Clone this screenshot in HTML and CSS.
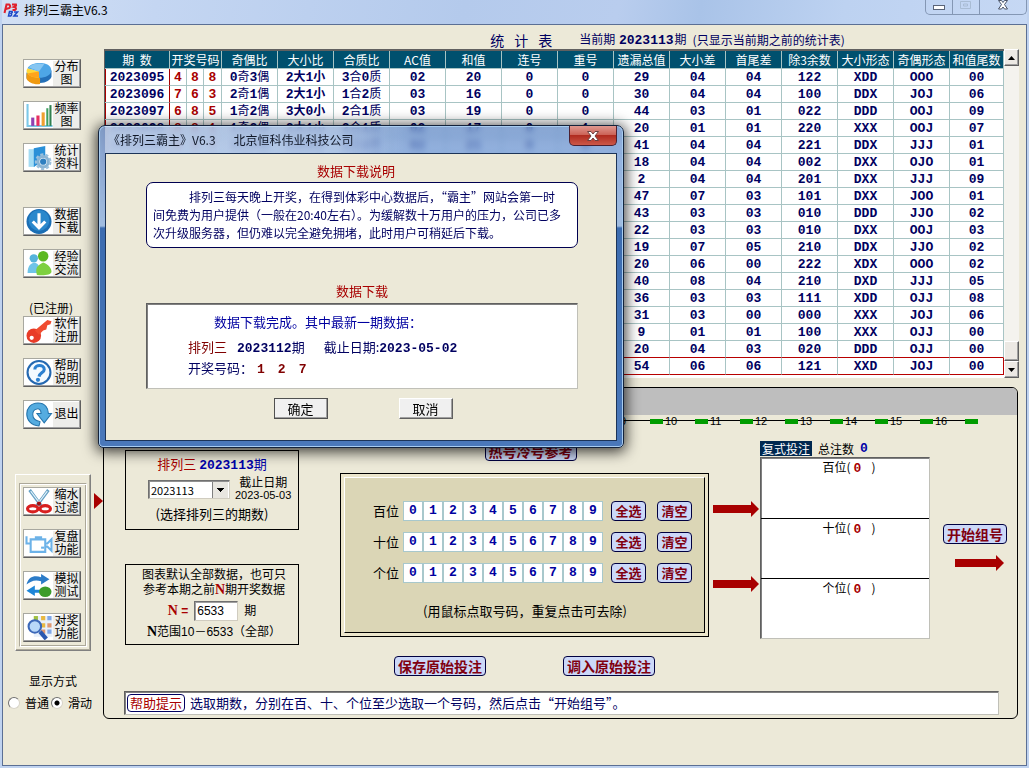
FILE: index.html
```html
<!DOCTYPE html>
<html lang="zh-CN">
<head>
  <meta charset="UTF-8">
  <meta name="viewport" content="width=device-width, initial-scale=1.0">
  <title>排列三霸主V6.3</title>
  <link rel="stylesheet" href="styles.css">
</head>
<body>
  <div class="window">
    <header class="titlebar">
      <svg class="app-logo" viewBox="0 0 16 16" width="16" height="16">
        <path d="M1.500 12 L3.500 3.500 H6 Q8 4.500 6.500 7 L3 8" fill="none" stroke="#e0202c" stroke-width="2"/>
        <path d="M9 3.500 H13 Q13.500 5 11 6 Q14.500 7 12 9 H9.500" fill="none" stroke="#e0202c" stroke-width="2"/>
        <path d="M6.500 10.500 H9 Q10 11.500 8 12.500 Q9.500 14 7.500 15 H5.500z M11 11 H14.500 L11 15 H15" fill="none" stroke="#1c48c8" stroke-width="1.500"/>
      </svg>
      <h1>排列三霸主V6.3</h1>
      <div class="win-buttons">
        <button aria-label="最小化"><svg width="14" height="14"><rect x="1.500" y="5.500" width="11" height="4" fill="#fff" stroke="#5a6478"/></svg></button>
        <button aria-label="最大化"><svg width="14" height="14"><path d="M1.500 1.500h10v7h-10z M4.500 4h4v2h-4z" fill="none" stroke="#a9bcd4"/></svg></button>
        <button class="win-close" aria-label="关闭"><svg width="14" height="14"><path d="M2.500 .5h3l1.500 2 1.500-2h3l-3 4 3 4.500h-3l-1.500-2-1.500 2h-3l3-4.500z" fill="#fff" stroke="#4a5468"/></svg></button>
      </div>
    </header>

    <div class="client">
      <nav class="sidebar">
        <div class="tool-group">
          <button class="tool">
            <svg viewBox="0 0 26 24"><path d="M1 11v5c1 4 7 6 13 5 6 0 10-3 11-6V9z" fill="#2470b8"/><path d="M1 12v5c2 4 8 6 13 5v-6z" fill="#f09a10"/><path d="M13 10L2 7c-3 4 1 9 11 9z" fill="#ffd83a"/><path d="M13 10v6c-5 0-9-1-11-4z" fill="#ffa41c"/><path d="M13 10L2 7C5 1 20 0 24 6c3 6-3 10-11 10z" fill="#4ea6e6"/><path d="M13 10L3 6C7 2 14 2 18 3z" fill="#86c6f2"/></svg>
            <span>分布<br>图</span>
          </button>
          <button class="tool">
            <svg viewBox="0 0 26 24"><path d="M2 1v21h24" fill="none" stroke="#7cc8e8" stroke-width="2"/><path d="M7 22v-8" stroke="#9040b0" stroke-width="3"/><path d="M12 22V12" stroke="#e83060" stroke-width="3"/><path d="M17 22V9" stroke="#f0a030" stroke-width="3"/><path d="M21 22V5" stroke="#40a060" stroke-width="2"/><path d="M24 22V2" stroke="#308050" stroke-width="2"/></svg>
            <span>频率<br>图</span>
          </button>
          <button class="tool">
            <svg viewBox="0 0 26 24"><path d="M3 4h6v17H3z" fill="#a4dcf4"/><path d="M8 3l11-2v13L8 21z" fill="#2a90d8"/><circle cx="17" cy="16" r="5" fill="#fff" stroke="#8ab4d4" stroke-width="3"/><circle cx="17" cy="16" r="7" fill="none" stroke="#9cc0dc" stroke-width="2" stroke-dasharray="3 2"/><circle cx="17" cy="16" r="3" fill="#2f7fc0"/></svg>
            <span>统计<br>资料</span>
          </button>
        </div>

        <div class="tool-group">
          <button class="tool">
            <svg viewBox="0 0 26 24"><circle cx="13" cy="12" r="12" fill="#1b6eb4"/><circle cx="13" cy="11" r="10" fill="#2a88cc"/><path d="M13 4v13M7 12l6 6 6-6" fill="none" stroke="#fff" stroke-width="3"/></svg>
            <span>数据<br>下载</span>
          </button>
          <button class="tool">
            <svg viewBox="0 0 26 24"><circle cx="8" cy="7" r="4" fill="#55b4dc"/><path d="M2 21c0-12 11-13 12-3v3z" fill="#6fc4e8"/><circle cx="17" cy="5" r="5" fill="#5cb820"/><path d="M11 23c-2-8 1-9 6-12 5 2 8 5 8 9 0 3-8 4-14 3z" fill="#7ed040"/></svg>
            <span>经验<br>交流</span>
          </button>
        </div>

        <p class="registered">(已注册)</p>
        <div class="tool-group">
          <button class="tool">
            <svg viewBox="0 0 26 24"><circle cx="8" cy="17" r="7" fill="#e83c28"/><path d="M9 12L21 2l4 1-1 3-3 1-1 4-3 1-4 4z" fill="#f04c30"/><circle cx="6" cy="19" r="2" fill="#fff"/></svg>
            <span>软件<br>注册</span>
          </button>
          <button class="tool">
            <svg viewBox="0 0 26 24"><circle cx="13" cy="12" r="11" fill="#f4faff" stroke="#2468b0" stroke-width="2"/><path d="M9 9c0-5 9-5 9 0 0 3-4 3-5 7" fill="none" stroke="#2c80d0" stroke-width="3"/><circle cx="12" cy="19" r="2" fill="#2c80d0"/></svg>
            <span>帮助<br>说明</span>
          </button>
          <button class="tool">
            <svg viewBox="0 0 26 24"><path d="M13 23C-3 22-2 1 12 1c7 0 10 5 10 10h3l-7 9-7-9h4c0-7-8-5-8 1 0 5 4 6 7 7z" fill="#55ace0" stroke="#2474ac"/></svg>
            <span>退出</span>
          </button>
        </div>

        <div class="tool-panel">
          <div class="tool-panel-inner">
            <button class="tool">
              <svg viewBox="0 0 26 24"><path d="M4 1l11 15M22 1L11 16" stroke="#64a0c4" stroke-width="3"/><path d="M5 2l9 12M21 2l-9 12" stroke="#e4f4fc"/><ellipse cx="7" cy="19" rx="5" ry="3" fill="none" stroke="#d82020" stroke-width="3"/><ellipse cx="19" cy="19" rx="5" ry="3" fill="none" stroke="#d82020" stroke-width="3"/><circle cx="13" cy="14" r="2" fill="#a01010"/></svg>
              <span>缩水<br>过滤</span>
            </button>
            <button class="tool">
              <svg viewBox="0 0 26 24"><path d="M5 8h14v12H5zM10 8V6h6M1 5v7h4M19 12h2l4-4v11l-4-4h-2" fill="none" stroke="#6cb2e8" stroke-width="2"/><path d="M15 16h3" stroke="#6cb2e8" stroke-width="2"/></svg>
              <span>复盘<br>功能</span>
            </button>
            <button class="tool">
              <svg viewBox="0 0 26 24"><path d="M1 11C3 3 9 2 15 4V1l8 5-8 5V8C9 6 5 8 1 11z" fill="#2c7cc8"/><path d="M14 16H9v-4L1 17l8 5v-3h5z" fill="#1e86d8"/><ellipse cx="19" cy="18" rx="6" ry="5" fill="#3c9c2c"/></svg>
              <span>模拟<br>测试</span>
            </button>
            <button class="tool">
              <svg viewBox="0 0 26 24"><path d="M8 1h18v20H8z" fill="#e8f0fa"/><path d="M8 3h4" stroke="#a0c040" stroke-width="4"/><path d="M15 3h4M15 10h4" stroke="#e8b840" stroke-width="4"/><path d="M21 3h4M21 16h4" stroke="#80a8e8" stroke-width="4"/><path d="M21 10h4M15 16h4" stroke="#e09870" stroke-width="4"/><circle cx="9" cy="11" r="6" fill="#b8d8f8" stroke="#3c68b8" stroke-width="2"/><path d="M14 16l6 7" stroke="#2a58b0" stroke-width="4"/></svg>
              <span>对奖<br>功能</span>
            </button>
          </div>
          <i class="pointer"></i>
        </div>

        <fieldset class="display-mode">
          <legend>显示方式</legend>
          <label><input type="radio" name="mode">普通</label>
          <label><input type="radio" name="mode" checked>滑动</label>
        </fieldset>
      </nav>

      <main class="main">
        <div class="stats-title">
          <h2><span>统</span><span>计</span><span>表</span></h2>
          <p>当前期 <b>2023113</b>期</p>
          <small>(只显示当前期之前的统计表)</small>
        </div>

        <div class="stats">
          <table>
            <colgroup>
              <col class="c-issue"><col class="c-num"><col class="c-num"><col class="c-num-last">
              <col><col><col><col><col><col><col><col><col><col><col><col><col><col class="c-tail">
            </colgroup>
            <thead>
              <tr>
                <th>期&nbsp; 数</th><th colspan="3">开奖号码</th><th>奇偶比</th><th>大小比</th><th>合质比</th>
                <th>AC值</th><th>和值</th><th>连号</th><th>重号</th><th>遗漏总值</th><th>大小差</th>
                <th>首尾差</th><th>除3余数</th><th>大小形态</th><th>奇偶形态</th><th>和值尾数</th>
              </tr>
            </thead>
            <tbody id="statsBody"></tbody>
          </table>
          <div class="scrollbar">
            <button aria-label="向上"><svg width="7" height="4"><path d="M0 4h7L3.500 0z"/></svg></button>
            <div class="thumb"></div>
            <button aria-label="向下"><svg width="7" height="4"><path d="M0 0h7L3.500 4z"/></svg></button>
          </div>
        </div>

        <section class="panel">
          <div class="panel-strip"></div>
          <ol class="ruler" id="ruler"></ol>

          <div class="work">
            <div class="side-boxes">
              <div class="box">
                <p class="box-title"><span class="red">排列三</span> <b class="blue">2023113</b><span class="blue">期</span></p>
                <div class="issue-row">
                  <select aria-label="期数"><option>2023113</option></select>
                  <div class="deadline">截止日期<span>2023-05-03</span></div>
                </div>
                <p class="hint">(选择排列三的期数)</p>
              </div>
              <div class="box box-range">
                <p>图表默认全部数据，也可只<br>参考本期之前<b class="n red">N</b>期开奖数据</p>
                <div class="n-row"><label for="nInput"><b class="n">N</b> =</label><input type="text" id="nInput" value="6533">期</div>
                <p><b class="n">N</b>范围10－6533（全部）</p>
              </div>
            </div>

            <div class="center">
              <button class="pill pill-wide hot">热号冷号参考</button>
              <div class="picker">
                <div class="picker-inner" id="picker">
                  <p class="hint">(用鼠标点取号码，重复点击可去除)</p>
                </div>
              </div>
              <div class="save-row">
                <button class="pill pill-wide">保存原始投注</button>
                <button class="pill pill-wide">调入原始投注</button>
              </div>
            </div>

            <div class="arrows">
              <svg viewBox="0 0 46 16"><path d="M0 4h38V0l8 8-8 8v-4H0z" fill="#a80000"/></svg>
              <svg viewBox="0 0 46 16"><path d="M0 4h38V0l8 8-8 8v-4H0z" fill="#a80000"/></svg>
            </div>

            <div class="result">
              <div class="result-head"><span class="tag">复式投注</span>总注数 <b class="blue">0</b></div>
              <div class="result-box">
                <div>百位(<b class="red">0</b>)</div>
                <div>十位(<b class="red">0</b>)</div>
                <div>个位(<b class="red">0</b>)</div>
              </div>
            </div>

            <div class="start">
              <button class="pill pill-wide">开始组号</button>
              <svg viewBox="0 0 49 16"><path d="M0 4h41V0l8 8-8 8v-4H0z" fill="#a80000"/></svg>
            </div>
          </div>

          <div class="help"><strong>帮助提示</strong><span>选取期数，分别在百、十、个位至少选取一个号码，然后点击“开始组号”。</span></div>
        </section>
      </main>
    </div>

    <div class="dialog" role="dialog" aria-label="数据下载">
      <div class="dialog-title">
        <span>《排列三霸主》V6.3</span><span>北京恒科伟业科技公司</span>
        <button class="dialog-close" aria-label="关闭"><svg width="14" height="12"><path d="M1.500 1.500h3.500l2 2.500 2-2.500h3.500l-3.500 4.500 3.500 4.500h-3.500l-2-2.500-2 2.500h-3.500l3.500-4.500z" fill="#fff" stroke="#6c4040"/></svg></button>
      </div>
      <div class="dialog-body">
        <h3>数据下载说明</h3>
        <p class="notice">排列三每天晚上开奖，在得到体彩中心数据后，“霸主”网站会第一时<br>间免费为用户提供（一般在20:40左右）。为缓解数十万用户的压力，公司已多<br>次升级服务器，但仍难以完全避免拥堵，此时用户可稍延后下载。</p>
        <h3>数据下载</h3>
        <div class="download">
          <p class="done">数据下载完成。其中最新一期数据：</p>
          <p class="latest"><span class="maroon">排列三</span><span><b>2023112</b>期</span><span class="until">截止日期:<b>2023-05-02</b></span></p>
          <p class="drawn">开奖号码：<b>1</b><b>2</b><b>7</b></p>
        </div>
        <div class="dialog-actions">
          <button class="default">确定</button>
          <button>取消</button>
        </div>
      </div>
    </div>
  </div>
  <script src="script.js"></script>
</body>
</html>
```

FILE: styles.css
```css
* {
  box-sizing: border-box;
}
body {
  margin: 0;
  font-family: "Noto Sans CJK SC", sans-serif;
  font-size: 12px;
  line-height: 16px;
  color: #000;
}
h1, h2, h3, p, ol {
  margin: 0;
  padding: 0;
  font-size: 12px;
  font-weight: normal;
}
button, select, input {
  font-family: inherit;
  font-size: 12px;
  margin: 0;
  padding: 0;
}
b {
  font-family: "Liberation Mono", "Noto Sans CJK SC", monospace;
  font-size: 13px;
}
.red {
  color: #a80000;
}
.blue {
  color: #0000a8;
}
.maroon {
  color: #800000;
}

/* window */
.window {
  position: relative;
  display: flex;
  flex-direction: column;
  min-height: 100vh;
  padding: 0 2px 2px;
  background: #c0d3f0;
}
.titlebar {
  display: flex;
  height: 24px;
  background: linear-gradient(100deg, #d2e0f4 0%, #c4d6f2 15%, #b4caec 45%, #b9cdee 60%, #a9c3e8 68%, #bdd2f1 82%, #c6d8f4 100%);
}
.app-logo {
  margin: 1px 5px 0 1px;
}
.titlebar h1 {
  flex: 1;
  line-height: 19px;
}
.win-buttons {
  display: flex;
  width: 102px;
  height: 15px;
  border: 1px solid #8497b4;
  border-top: 0;
  border-radius: 0 0 5px 5px;
}
.win-buttons button {
  display: flex;
  flex: 1;
  justify-content: center;
  border: 0;
  border-right: 1px solid #8497b4;
  background: none;
}
.win-buttons .win-close {
  flex: 0 0 46px;
  border-right: 0;
}
.client {
  flex: 1;
  display: flex;
  border: 1px solid #5b6f94;
  background: #ece9d8;
}

/* left tool bar */
.sidebar {
  flex: 0 0 100px;
  padding-top: 34px;
}
.tool-group {
  display: flex;
  flex-direction: column;
  gap: 13px;
  padding-left: 20px;
  margin-bottom: 35px;
}
.tool {
  display: flex;
  align-items: center;
  width: 58px;
  height: 29px;
  border: 1px solid;
  border-color: #a8a8a0 #606060 #606060 #a8a8a0;
  box-shadow: inset -1px -1px #a0a0a0, inset 1px 1px #fff;
  background: #ededea;
}
.tool svg {
  flex: 0 0 28px;
  height: 25px;
  margin-left: 1px;
  background: #fff;
}
.tool span {
  flex: 1;
  font-family: "Liberation Sans", "Noto Sans CJK SC", sans-serif;
  font-size: 12px;
  line-height: 13px;
  white-space: nowrap;
}
.registered {
  margin-top: -13px;
  padding-left: 26px;
}
.registered + .tool-group {
  margin-bottom: 45px;
}
.tool-panel {
  position: relative;
  width: 76px;
  margin-left: 12px;
  padding: 8px 3px 3px;
  border: 1px solid;
  border-color: #fff #808080 #808080 #fff;
  box-shadow: inset -1px -1px #aca899;
}
.tool-panel-inner {
  display: flex;
  flex-direction: column;
  gap: 13px;
  padding: 3px 3px 4px;
  border: 1px solid;
  border-color: #aca899 #fff #fff #aca899;
  box-shadow: inset 1px 1px #fff, inset -1px -1px #aca899;
}
.pointer {
  position: absolute;
  left: 78px;
  top: 18px;
  border-left: 9px solid #a80000;
  border-top: 8px solid transparent;
  border-bottom: 8px solid transparent;
}
.display-mode {
  display: flex;
  margin: 22px 0 0;
  padding: 0 0 0 5px;
  border: 0;
}
.display-mode legend {
  padding: 0 0 6px 21px;
}
.display-mode label {
  display: flex;
  align-items: center;
  gap: 5px;
  width: 43px;
  white-space: nowrap;
}
.display-mode input {
  appearance: none;
  flex: 0 0 12px;
  height: 12px;
  border: 1px solid;
  border-color: #707070 #d8d4c8 #d8d4c8 #707070;
  border-radius: 50%;
  background: #fff;
}
.display-mode input:checked {
  background: radial-gradient(#000 2px, #fff 3px);
}

/* statistics table */
.main {
  flex: 1;
  min-width: 0;
  padding-right: 8px;
}
.stats-title {
  display: flex;
  justify-content: center;
  align-items: center;
  height: 24px;
  padding: 6px 0 0 214px;
  color: #000060;
  white-space: nowrap;
}
.stats-title h2 {
  display: flex;
  gap: 10px;
  margin-right: 27px;
  font-size: 14px;
}
.stats-title p {
  font-size: 12px;
}
.stats-title b {
  margin: 0 1px;
  font-size: 13px;
}
.stats-title small {
  margin-left: 6px;
  font-size: 12px;
}
.stats {
  display: flex;
  height: 329px;
  margin: 0 -1px 0 1px;
  border-top: 2px solid #606060;
  border-left: 1px solid #606060;
  background: #fff;
}
table {
  flex: 1;
  align-self: flex-start;
  min-width: 0;
  table-layout: fixed;
  border-collapse: separate;
  border-spacing: 0;
}
col {
  width: 56px;
}
.c-issue {
  width: 65px;
}
.c-num {
  width: 17px;
}
.c-num-last {
  width: 18px;
}
.c-tail {
  width: 54px;
}
th {
  height: 18px;
  padding: 0;
  border-right: 1px solid #a8c4c4;
  border-bottom: 1px solid #a8c4c4;
  background: #00506e;
  color: #fff;
  font-size: 12px;
  font-weight: normal;
  line-height: 17px;
  white-space: nowrap;
}
td {
  height: 17px;
  padding: 2px 0 0;
  border-right: 1px solid #a8c4c4;
  border-bottom: 1px solid #a8c4c4;
  color: #000060;
  font: bold 13px/14px "Liberation Mono", "Noto Sans CJK SC", monospace;
  text-align: center;
  white-space: nowrap;
}
td i {
  font-size: 12px;
  font-style: normal;
  font-weight: normal;
  line-height: 0;
}
td i.strong {
  font-weight: bold;
}
.issue {
  border-right-color: #a80000;
  box-shadow: inset 1px 0 #a80000;
}
.ball {
  color: #a80000;
}
.current td, tr:nth-last-child(2) td {
  border-bottom-color: #b80000;
}
.current td:last-child {
  border-right-color: #b80000;
}
.scrollbar {
  display: flex;
  flex: 0 0 15px;
  flex-direction: column;
  margin-top: -2px;
  background: #f4f3ee;
}
.scrollbar button, .thumb {
  display: flex;
  align-items: center;
  justify-content: center;
  height: 17px;
  border: 1px solid;
  border-color: #fff #606060 #606060 #fff;
  box-shadow: inset -1px -1px #a0a0a0;
  background: #ece9e4;
}
.thumb {
  height: 20px;
  margin-top: auto;
}

/* betting panel */
.panel {
  margin-top: 9px;
  border: 1px solid #000;
  border-radius: 6px;
  overflow: hidden;
}
.panel-strip {
  height: 27px;
  background: #bebebe;
}
.ruler {
  display: flex;
  height: 12px;
  margin: 0 39px 0 141px;
  list-style: none;
  background: linear-gradient(#000, #000) 0 5px / 100% 1px no-repeat;
}
.ruler li {
  flex: 1;
  display: flex;
  align-items: center;
  gap: 2px;
  font: 11px/10px "Liberation Sans", sans-serif;
}
.ruler li::before {
  content: "";
  width: 13px;
  height: 5px;
  background: #009c00;
}
.ruler li:last-child {
  flex: 0 0 13px;
}
.work {
  display: flex;
  padding: 14px 10px 0 21px;
}
.side-boxes {
  flex: 0 0 174px;
  margin-right: 41px;
  padding-top: 9px;
}
.box {
  height: 80px;
  border: 1px solid #000;
  text-align: center;
}
.box-title {
  padding-top: 5px;
  font-size: 13px;
}
.issue-row {
  display: flex;
  gap: 5px;
  padding: 3px 0 0 22px;
}
.issue-row select {
  width: 82px;
  height: 19px;
  margin-top: 3px;
  padding-left: 2px;
  appearance: none;
  border: 1px solid;
  border-color: #707070 #d0ccc0 #d0ccc0 #707070;
  border-radius: 0;
  box-shadow: inset 1px 1px #909090;
  background: linear-gradient(#000, #000) 68px 7px / 7px 1px no-repeat,
    linear-gradient(#000, #000) 69px 8px / 5px 1px no-repeat,
    linear-gradient(#000, #000) 70px 9px / 3px 1px no-repeat,
    linear-gradient(#000, #000) 71px 10px / 1px 1px no-repeat,
    linear-gradient(90deg, #808080 1px, #e8e6e0 1px) 63px 1px / 16px 16px no-repeat, #fff;
  font-size: 11px;
}
.deadline {
  font-family: "Liberation Sans", "Noto Sans CJK SC", sans-serif;
  line-height: 12px;
}
.deadline span {
  display: block;
  font: 11px/12px "Liberation Sans", sans-serif;
}
.hint {
  font-size: 13px;
}
.box .hint {
  margin-top: 5px;
}
.box-range {
  height: 81px;
  margin-top: 34px;
  padding-top: 3px;
  font-family: "Liberation Sans", "Noto Sans CJK SC", sans-serif;
  line-height: 15px;
}
.box-range p {
  padding-left: 4px;
}
.n {
  font: bold 14px/12px "Liberation Serif", serif;
}
.n-row {
  display: flex;
  align-items: center;
  justify-content: center;
  gap: 6px;
  margin: 3px 0 4px;
}
.n-row label {
  color: #a80000;
  font-weight: bold;
}
.n-row input {
  width: 44px;
  height: 20px;
  border: 1px solid;
  border-color: #707070 #d0ccc0 #d0ccc0 #707070;
  box-shadow: inset 1px 1px #a0a0a0;
  background: #fff;
  padding-left: 2px;
}
.center {
  flex: 1;
  display: flex;
  flex-direction: column;
  align-items: center;
}
.pill {
  height: 20px;
  padding: 0 3px;
  border: 1px solid #000040;
  border-radius: 4px;
  background: #ccd8f8;
  color: #800010;
  font-size: 13px;
  font-weight: bold;
  line-height: 16px;
  white-space: nowrap;
}
.pill-wide {
  font-size: 14px;
}
.hot {
  margin-left: 12px;
}
.picker {
  align-self: stretch;
  height: 164px;
  margin: 12px 0 19px;
  padding: 3px;
  border: 1px solid #000;
  background: #ece6cc;
}
.picker-inner {
  height: 100%;
  padding: 23px 0 0 28px;
  border: 1px solid;
  border-color: #fff #000 #000 #fff;
  background: #dbd6b6;
}
.digits {
  display: flex;
  align-items: center;
  height: 20px;
  margin-bottom: 11px;
  font-size: 13px;
}
.digits span {
  width: 30px;
}
.digits .pill {
  width: 35px;
  margin-left: 8px;
}
.digits .pill + .pill {
  margin-left: 11px;
}
.digit {
  width: 20px;
  height: 20px;
  border: 1px solid #a8c8cc;
  background: #fff;
  color: #0000a0;
  font: bold 13px/16px "Liberation Mono", monospace;
}
.picker .hint {
  margin-top: 20px;
  padding-left: 50px;
}
.save-row {
  display: flex;
  gap: 77px;
}
.arrows {
  display: flex;
  flex: 0 0 46px;
  flex-direction: column;
  gap: 59px;
  margin: 60px 1px 0 4px;
}
.result {
  flex: 0 0 170px;
}
.result-head {
  display: flex;
  gap: 6px;
  height: 16px;
}
.tag {
  height: 15px;
  padding: 0 2px;
  background: #002850;
  color: #fff;
}
.result-box {
  border: 1px solid;
  border-color: #606060 #c0c0b8 #c0c0b8 #606060;
  box-shadow: inset 1px 1px #808080;
  background: #fff;
  text-align: center;
}
.result-box div {
  height: 60px;
  padding: 1px 0 0 8px;
}
.result-box div + div {
  border-top: 1px solid #000;
}
.result-box b {
  margin: 0 10px 0 3px;
}
.start {
  flex: 0 0 63px;
  margin: 83px 0 0 13px;
}
.start svg {
  width: 49px;
  margin: 11px 0 0 12px;
}
.help {
  display: flex;
  align-items: center;
  gap: 5px;
  height: 24px;
  margin: 15px 18px 3px 20px;
  padding-left: 2px;
  border: 1px solid;
  border-color: #606060 #c0c0b8 #c0c0b8 #606060;
  box-shadow: inset 1px 1px #808080;
  background: #fff;
  color: #000060;
  font-size: 13px;
}
.help strong {
  padding: 0 2px;
  border: 1px solid #000060;
  border-radius: 4px;
  color: #a80000;
  font-weight: normal;
}

/* download dialog */
.dialog {
  position: absolute;
  left: 98px;
  top: 125px;
  width: 526px;
  padding: 0 6px 6px;
  border: 1px solid #14233c;
  border-radius: 7px 7px 5px 5px;
  box-shadow: inset 0 0 0 1px #a8ccf0, 0 2px 14px 2px rgba(0, 0, 0, .75);
  background: linear-gradient(#6088c4c0, #7098d4c0 28px, #a0bce0 100px, #3c6cb0 102px, #4a78ba);
  backdrop-filter: blur(3px);
}
.dialog-title {
  display: flex;
  height: 27px;
  padding-left: 3px;
  line-height: 28px;
  color: #101828;
  background: linear-gradient(90deg, rgba(230, 236, 246, .5) 0, rgba(220, 230, 244, .4) 230px, transparent 300px);
}
.dialog-title span {
  margin-right: 18px;
}
.dialog-close {
  display: flex;
  align-items: center;
  justify-content: center;
  width: 48px;
  height: 20px;
  margin-left: auto;
  border: 1px solid #4c2030;
  border-top: 0;
  border-radius: 0 0 5px 5px;
  background: linear-gradient(#e09890, #cc6458 45%, #b02c20 50%, #cc5848);
}
.dialog-body {
  height: 288px;
  padding: 9px 38px 0 40px;
  border: 1px solid #1c3458;
  background: #ece9d8;
  color: #000060;
}
.dialog-body h3 {
  color: #a80000;
  font-size: 13px;
  text-align: center;
}
.dialog-body h3:first-child {
  padding-right: 12px;
}
.notice {
  height: 66px;
  margin: 3px 0 35px;
  padding: 5px 0 0 6px;
  border: 1px solid #000050;
  border-radius: 7px;
  background: #fff;
  line-height: 18px;
  white-space: nowrap;
}
.notice::before {
  content: "";
  display: inline-block;
  width: 36px;
}
.download {
  height: 86px;
  margin-top: 4px;
  padding: 10px 0 0 41px;
  border: 1px solid;
  border-color: #606060 #c0c0b8 #c0c0b8 #606060;
  box-shadow: inset 1px 1px #808080;
  background: #fff;
}
.download p {
  font-size: 13px;
}
.done {
  padding-left: 26px;
  color: #0000a0;
}
.latest {
  display: flex;
  gap: 10px;
  margin: 9px 0 3px;
}
.until {
  margin-left: 9px;
}
.drawn b {
  margin: 0 9px 0 4px;
  color: #800000;
}
.dialog-actions {
  display: flex;
  justify-content: center;
  gap: 71px;
  padding: 9px 0 0 2px;
}
.dialog-actions button {
  width: 54px;
  height: 21px;
  border: 1px solid;
  border-color: #fff #606060 #606060 #fff;
  box-shadow: inset -1px -1px #a0a0a0;
  background: #f0f0f0;
  font-size: 13px;
  line-height: 17px;
}
.dialog-actions .default {
  border-color: #505050;
}
```

FILE: script.js
```js
// issue, drawn numbers, odd/even, big/small, composite/prime, AC, sum, consecutive, repeat,
// total omission, size gap, head-tail gap, mod 3, size pattern, parity pattern, sum tail
const rows = [
  '2023095 4 8 8 0奇3偶 2大1小 3合0质 02 20 0 0 29 04 04 122 XDD OOO 00',
  '2023096 7 6 3 2奇1偶 2大1小 1合2质 03 16 0 0 30 04 04 100 DDX JOJ 06',
  '2023097 6 8 5 1奇2偶 3大0小 2合1质 03 19 0 0 44 03 01 022 DDD OOJ 09',
  '2023098 8 8 1 1奇2偶 2大1小 2合1质 02 17 0 1 20 01 01 220 XXX OOJ 07',
  '2023099 9 5 7 3奇0偶 3大0小 1合2质 02 21 0 0 41 04 04 221 DDX JJJ 01',
  '2023100 6 3 2 1奇2偶 1大2小 1合2质 03 11 1 0 18 04 04 002 DXX OJO 01',
  '2023101 5 3 1 3奇0偶 1大2小 0合3质 02 09 0 1 2 04 04 201 DXX JJJ 09',
  '2023102 7 0 4 1奇2偶 1大2小 2合1质 03 11 0 0 47 07 03 101 DXX JOO 01',
  '2023103 9 7 6 2奇1偶 3大0小 2合1质 03 22 1 1 43 03 03 010 DDD JJO 02',
  '2023104 6 4 3 1奇2偶 1大2小 2合1质 03 13 1 1 22 03 03 010 DXX OOJ 03',
  '2023105 5 7 0 2奇1偶 2大1小 1合2质 03 12 0 0 19 07 05 210 DDX JJO 02',
  '2023106 2 8 2 0奇3偶 1大2小 1合2质 02 12 0 0 20 06 00 222 XDX OOO 02',
  '2023107 5 1 9 3奇0偶 2大1小 1合2质 03 15 0 0 40 08 04 210 DXD JJJ 05',
  '2023108 4 7 7 2奇1偶 2大1小 1合2质 02 18 0 0 36 03 03 111 XDD OJJ 08',
  '2023109 3 0 3 2奇1偶 0大3小 1合2质 02 06 0 0 31 03 00 000 XXX JOJ 06',
  '2023110 4 3 3 2奇1偶 0大3小 1合2质 02 10 1 1 9 01 01 100 XXX OJJ 00',
  '2023111 6 5 9 2奇1偶 3大0小 2合1质 03 20 1 0 20 04 03 020 DDD OJJ 00',
  '2023112 1 2 7 2奇1偶 1大2小 0合3质 03 10 1 0 54 06 06 121 XXD JOJ 00'
];

document.getElementById('statsBody').innerHTML = rows.map((row, n) => {
  const cells = row.split(' ').map((text, i) => {
    const cls = i === 0 ? 'issue' : i < 4 ? 'ball' : '';
    const html = text
      .replace(/[奇偶合质]/g, '<i>$&</i>')
      .replace(/[大小]/g, '<i class="strong">$&</i>');
    return `<td class="${cls}">${html}</td>`;
  }).join('');
  return `<tr class="${n === rows.length - 1 ? 'current' : ''}">${cells}</tr>`;
}).join('');

let marks = '';
for (let i = 1; i <= 16; i++) {
  marks += `<li>${i}</li>`;
}
document.getElementById('ruler').innerHTML = marks + '<li></li>';

const digits = [0, 1, 2, 3, 4, 5, 6, 7, 8, 9].map(d => `<button class="digit">${d}</button>`).join('');
document.getElementById('picker').insertAdjacentHTML('afterbegin', ['百位', '十位', '个位'].map(name =>
  `<div class="digits"><span>${name}</span>${digits}<button class="pill">全选</button><button class="pill">清空</button></div>`
).join(''));
```
